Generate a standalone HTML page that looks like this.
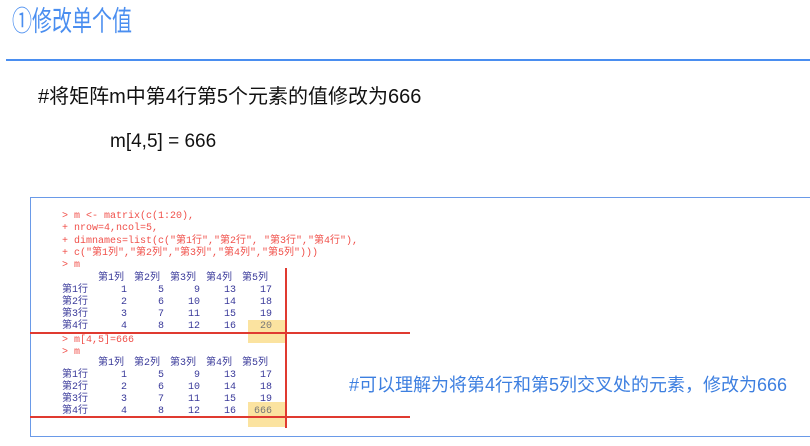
<!DOCTYPE html>
<html><head><meta charset="utf-8"><style>
body{margin:0;width:810px;height:446px;background:#fff;position:relative;overflow:hidden;font-family:"Liberation Sans","Noto Sans CJK SC",sans-serif}
.a{position:absolute;white-space:nowrap}
.c{font-family:"Liberation Mono","Noto Sans CJK SC",monospace;font-size:10px;line-height:12.3px}
.r{color:#f0504a}.b{color:#3a3a9a}
.n{position:absolute;width:30px;text-align:right}
.h{position:absolute;top:0}
</style></head><body>
<div class="a" style="left:12px;top:8px;font-size:20px;line-height:20px;color:#4a8ef0;transform:scaleY(1.4);transform-origin:0 0">①修改单个值</div>
<div class="a" style="left:6px;top:59px;width:804px;height:2px;background:#4a8ef0"></div>
<div class="a" style="left:38px;top:80px;font-size:20px;color:#111">#将矩阵m中第4行第5个元素的值修改为666</div>
<div class="a" style="left:110px;top:131px;font-size:19px;color:#111">m[4,5] = 666</div>
<div class="a" style="left:30px;top:197px;width:790px;height:238px;border:1px solid #6a9ae8"></div>
<div class="a" style="left:248px;top:320px;width:38px;height:23px;background:#fbe3a0"></div>
<div class="a" style="left:248px;top:402px;width:38px;height:25px;background:#fbe3a0"></div>
<div class="a c r" style="left:62px;top:211px">&gt; m &lt;- matrix(c(1:20),<br>+ nrow=4,ncol=5,<br>+ dimnames=list(c("第1行","第2行", "第3行","第4行"),<br>+ c("第1列","第2列","第3列","第4列","第5列")))<br>&gt; m</div>
<div class="a c b" style="left:62px;top:273px;width:230px;height:60px">
<div class="h" style="left:36px">第1列</div><div class="h" style="left:72px">第2列</div><div class="h" style="left:108px">第3列</div><div class="h" style="left:144px">第4列</div><div class="h" style="left:180px">第5列</div>
<div class="a" style="top:12px">第1行</div><div class="a" style="top:24px">第2行</div><div class="a" style="top:36px">第3行</div><div class="a" style="top:48px">第4行</div>
<div class="n" style="left:35px;top:12px">1</div><div class="n" style="left:72px;top:12px">5</div><div class="n" style="left:108px;top:12px">9</div><div class="n" style="left:144px;top:12px">13</div><div class="n" style="left:180px;top:12px">17</div>
<div class="n" style="left:35px;top:24px">2</div><div class="n" style="left:72px;top:24px">6</div><div class="n" style="left:108px;top:24px">10</div><div class="n" style="left:144px;top:24px">14</div><div class="n" style="left:180px;top:24px">18</div>
<div class="n" style="left:35px;top:36px">3</div><div class="n" style="left:72px;top:36px">7</div><div class="n" style="left:108px;top:36px">11</div><div class="n" style="left:144px;top:36px">15</div><div class="n" style="left:180px;top:36px">19</div>
<div class="n" style="left:35px;top:48px">4</div><div class="n" style="left:72px;top:48px">8</div><div class="n" style="left:108px;top:48px">12</div><div class="n" style="left:144px;top:48px">16</div><div class="n" style="left:180px;top:48px;color:#777">20</div>
</div>
<div class="a c r" style="left:62px;top:335px">&gt; m[4,5]=666<br>&gt; m</div>
<div class="a c b" style="left:62px;top:358px;width:230px;height:60px">
<div class="h" style="left:36px">第1列</div><div class="h" style="left:72px">第2列</div><div class="h" style="left:108px">第3列</div><div class="h" style="left:144px">第4列</div><div class="h" style="left:180px">第5列</div>
<div class="a" style="top:12px">第1行</div><div class="a" style="top:24px">第2行</div><div class="a" style="top:36px">第3行</div><div class="a" style="top:48px">第4行</div>
<div class="n" style="left:35px;top:12px">1</div><div class="n" style="left:72px;top:12px">5</div><div class="n" style="left:108px;top:12px">9</div><div class="n" style="left:144px;top:12px">13</div><div class="n" style="left:180px;top:12px">17</div>
<div class="n" style="left:35px;top:24px">2</div><div class="n" style="left:72px;top:24px">6</div><div class="n" style="left:108px;top:24px">10</div><div class="n" style="left:144px;top:24px">14</div><div class="n" style="left:180px;top:24px">18</div>
<div class="n" style="left:35px;top:36px">3</div><div class="n" style="left:72px;top:36px">7</div><div class="n" style="left:108px;top:36px">11</div><div class="n" style="left:144px;top:36px">15</div><div class="n" style="left:180px;top:36px">19</div>
<div class="n" style="left:35px;top:48px">4</div><div class="n" style="left:72px;top:48px">8</div><div class="n" style="left:108px;top:48px">12</div><div class="n" style="left:144px;top:48px">16</div><div class="n" style="left:180px;top:48px;color:#777">666</div>
</div>
<div class="a" style="left:30px;top:332px;width:380px;height:2px;background:#e03a30"></div>
<div class="a" style="left:30px;top:416px;width:380px;height:2px;background:#e03a30"></div>
<div class="a" style="left:285px;top:268px;width:2px;height:160px;background:#e03a30"></div>
<div class="a" style="left:349px;top:371px;font-size:18px;color:#3d7fe0">#可以理解为将第4行和第5列交叉处的元素，修改为666</div>
</body></html>
